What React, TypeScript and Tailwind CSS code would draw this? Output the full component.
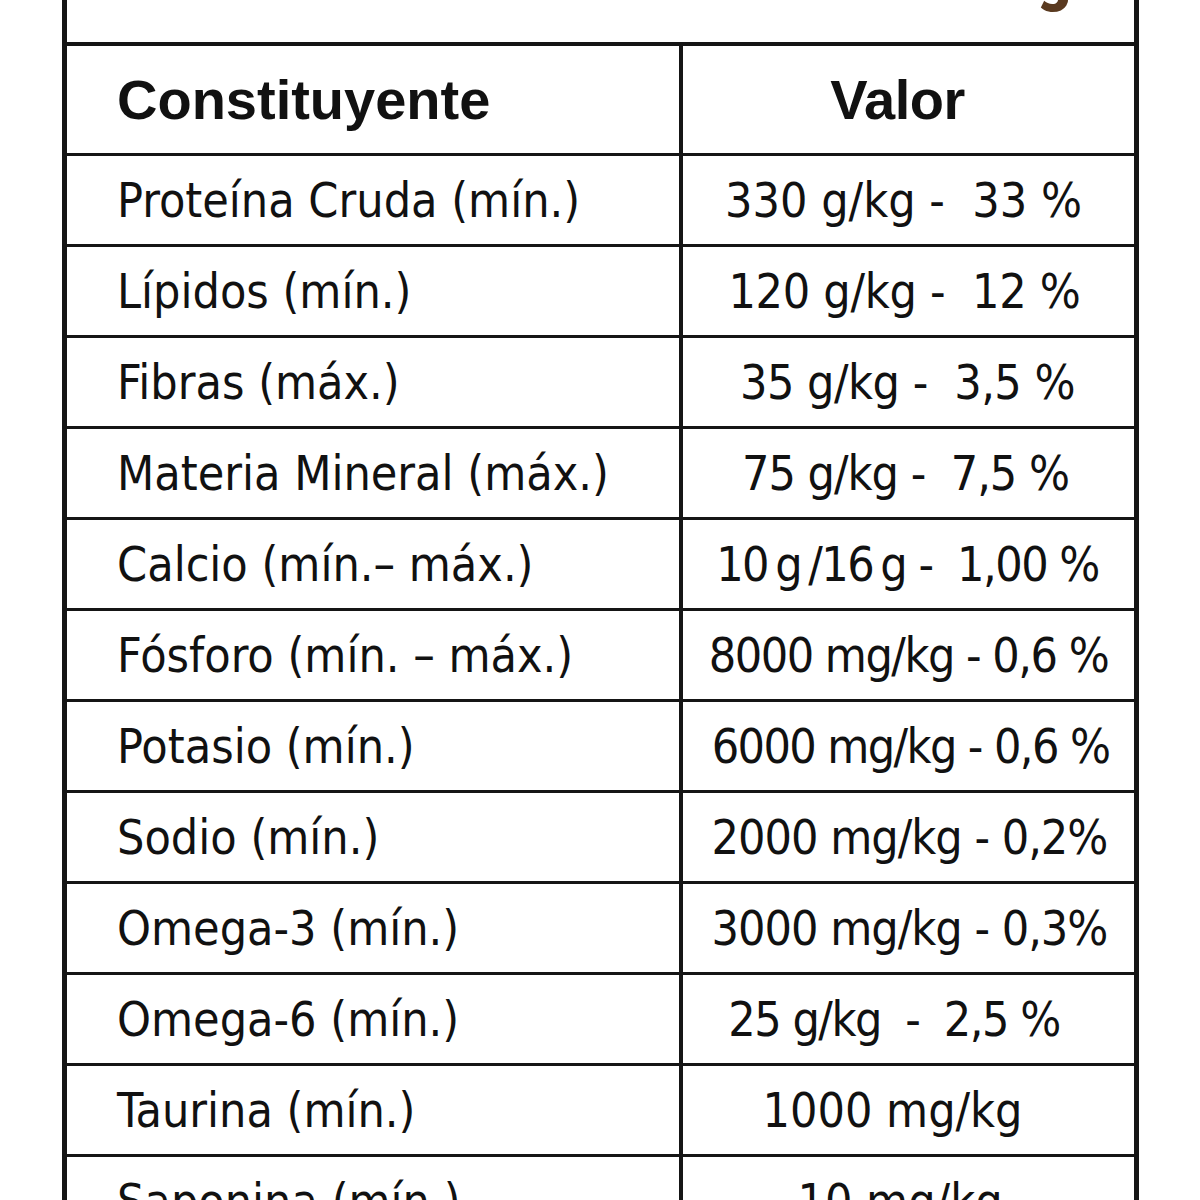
const rows: { name: string; value: string; cls: string }[] = [
  { name: 'Proteína Cruda (mín.)', value: '330 g/kg -  33 %', cls: 'pr-[10px]' },
  { name: 'Lípidos (mín.)', value: '120 g/kg -  12 %', cls: 'pr-[8px] tracking-[-0.3px]' },
  { name: 'Fibras (máx.)', value: '35 g/kg -  3,5 %', cls: 'pr-[2px] tracking-[-0.5px]' },
  { name: 'Materia Mineral (máx.)', value: '75 g/kg -  7,5 %', cls: 'pr-[6px] tracking-[-1px]' },
  { name: 'Calcio (mín.– máx.)', value: '10\u2009g\u2009/16\u2009g -  1,00 %', cls: 'pr-[2px] tracking-[-1.5px]' },
  { name: 'Fósforo (mín. – máx.)', value: '8000 mg/kg - 0,6 %', cls: 'pr-0 tracking-[-1.5px]' },
  { name: 'Potasio (mín.)', value: '6000 mg/kg - 0,6 %', cls: 'pl-[4px] tracking-[-1.6px]' },
  { name: 'Sodio (mín.)', value: '2000 mg/kg - 0,2%', cls: 'pl-[2px] tracking-[-1px]' },
  { name: 'Omega-3 (mín.)', value: '3000 mg/kg - 0,3%', cls: 'pl-[2px] tracking-[-1px]' },
  { name: 'Omega-6 (mín.)', value: '25 g/kg  -  2,5 %', cls: 'pr-[29px] tracking-[-1.5px]' },
  { name: 'Taurina (mín.)', value: '1000 mg/kg', cls: 'pr-[32px]' },
  { name: 'Saponina (mín.)', value: '10 mg/kg', cls: 'pr-[17px]' },
];

export default function App() {
  return (
    <div className="bg-white min-h-screen">
      <div className="ml-[62px] w-[1077px] border-x-[5px] border-[#151515] text-[#111]">
        {/* title row, mostly above the crop */}
        <div className="h-[42px] overflow-hidden border-b-4 border-[#151515] box-content">
          <p className="-mt-[63px] pr-[62px] text-right text-[72px] leading-[72px] font-bold text-[#5a3a20] font-['Roboto_Condensed',sans-serif] whitespace-nowrap">
            Niveles Garantizados en 1 kg
          </p>
        </div>

        <div className="flex h-[107px] border-b-[3px] border-[#151515] box-content">
          <div className="w-[616px] shrink-0 border-r-4 border-[#151515] flex items-center pl-[50px]">
            <span className="text-[56px] font-bold font-['Liberation_Sans',sans-serif]">Constituyente</span>
          </div>
          <div className="flex-1 flex items-center justify-center pr-[22px]">
            <span className="text-[56px] font-bold tracking-[-0.5px] font-['Liberation_Sans',sans-serif]">Valor</span>
          </div>
        </div>

        {rows.map((r) => (
          <div key={r.name} className="flex h-[88px] border-b-[3px] border-[#151515] box-content">
            <div className="w-[616px] shrink-0 border-r-4 border-[#151515] flex items-center pl-[50px]">
              <span className="text-[48px] font-['DejaVu_Sans_Condensed',sans-serif] whitespace-pre">{r.name}</span>
            </div>
            <div className={`flex-1 flex items-center justify-center ${r.cls}`}>
              <span className="text-[48px] font-['DejaVu_Sans_Condensed',sans-serif] whitespace-pre">{r.value}</span>
            </div>
          </div>
        ))}
      </div>
    </div>
  );
}
